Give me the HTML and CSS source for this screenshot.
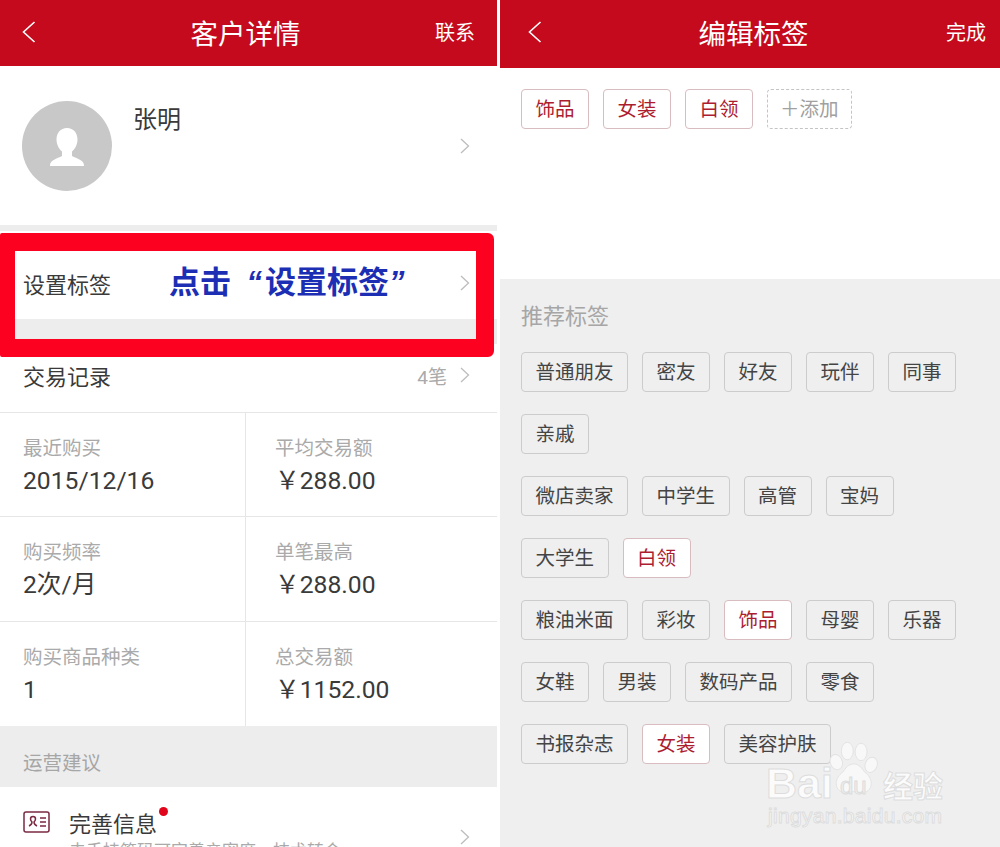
FILE: index.html
```html
<!DOCTYPE html>
<html lang="zh-CN">
<head>
    <meta charset="UTF-8">
    <title>客户详情</title>
    <link rel="stylesheet" href="styles.css">
</head>
<body>

<div class="screens">

    <!-- 左边：客户详情 -->
    <div class="panel panel-left">
        <div class="top-bar">
            <svg class="back" width="14" height="22" viewBox="0 0 14 22"><polyline points="12.5,1 1.5,11 12.5,21"/></svg>
            <div class="title">客户详情</div>
            <div class="action">联系</div>
        </div>

        <div class="profile">
            <div class="avatar">
                <svg width="90" height="90" viewBox="0 0 90 90"><path d="M45 27c-6.500 0-10.500 5-10.500 11.500 0 5 2.500 9.500 5.500 12v4.500c-5 2.500-12 4-12 9.500v0.500h34v-0.500c0-5.500-7-7-12-9.500v-4.500c3-2.500 5.500-7 5.500-12 0-6.500-4-11.500-10.500-11.500z" fill="#fff"/></svg>
            </div>
            <div class="name">张明</div>
            <svg class="chevron" width="10" height="16" viewBox="0 0 10 16"><polyline points="1,1 8.500,8 1,15"/></svg>
        </div>

        <div class="row row-tags">
            <span class="row-label">设置标签</span>
            <svg class="chevron" width="10" height="16" viewBox="0 0 10 16"><polyline points="1,1 8.500,8 1,15"/></svg>
        </div>

        <div class="row row-trade">
            <span class="row-label">交易记录</span>
            <span class="row-count">4笔</span>
            <svg class="chevron" width="10" height="16" viewBox="0 0 10 16"><polyline points="1,1 8.500,8 1,15"/></svg>
        </div>

        <div class="stats">
            <div class="stat"><div class="stat-label">最近购买</div><div class="stat-value">2015/12/16</div></div>
            <div class="stat"><div class="stat-label">平均交易额</div><div class="stat-value">￥288.00</div></div>
            <div class="stat"><div class="stat-label">购买频率</div><div class="stat-value">2次/月</div></div>
            <div class="stat"><div class="stat-label">单笔最高</div><div class="stat-value">￥288.00</div></div>
            <div class="stat"><div class="stat-label">购买商品种类</div><div class="stat-value">1</div></div>
            <div class="stat"><div class="stat-label">总交易额</div><div class="stat-value">￥1152.00</div></div>
        </div>

        <div class="section-title">运营建议</div>

        <div class="advice">
            <svg class="advice-icon" width="28" height="22" viewBox="0 0 28 22">
                <rect x="1" y="1" width="25" height="20" rx="2"/>
                <path d="M6 15c2-1 3-2 3-4-1-1-1.500-2-1.500-3 0-1.500 1-2.500 2.500-2.500s2.500 1 2.500 2.500c0 1-.5 2-1.500 3 0 2 1 3 3 4"/>
                <path d="M17 7h6M17 11h6M17 15h6"/>
            </svg>
            <div class="advice-text">
                <div class="advice-name">完善信息<span class="dot"></span></div>
                <div class="advice-desc">去手持筹码可完善亲密度，技术转会</div>
            </div>
            <svg class="chevron" width="10" height="16" viewBox="0 0 10 16"><polyline points="1,1 8.500,8 1,15"/></svg>
        </div>

        <!-- 截图上的红框和说明文字 -->
        <div class="mark-box">
            <span class="mark-text">点击<i class="quote-open">“</i>设置标签<i class="quote-close">”</i></span>
        </div>
    </div>

    <!-- 右边：编辑标签 -->
    <div class="panel panel-right">
        <div class="top-bar">
            <svg class="back" width="14" height="22" viewBox="0 0 14 22"><polyline points="12.5,1 1.5,11 12.5,21"/></svg>
            <div class="title">编辑标签</div>
            <div class="action">完成</div>
        </div>

        <div class="my-tags">
            <span class="tag active">饰品</span>
            <span class="tag active">女装</span>
            <span class="tag active">白领</span>
            <span class="tag add">＋添加</span>
        </div>

        <div class="recommend">
            <div class="recommend-title">推荐标签</div>
            <div class="tag-group">
                <span class="tag">普通朋友</span>
                <span class="tag">密友</span>
                <span class="tag">好友</span>
                <span class="tag">玩伴</span>
                <span class="tag">同事</span>
                <span class="tag">亲戚</span>
            </div>
            <div class="tag-group">
                <span class="tag">微店卖家</span>
                <span class="tag">中学生</span>
                <span class="tag">高管</span>
                <span class="tag">宝妈</span>
                <span class="tag">大学生</span>
                <span class="tag active">白领</span>
            </div>
            <div class="tag-group">
                <span class="tag">粮油米面</span>
                <span class="tag">彩妆</span>
                <span class="tag active">饰品</span>
                <span class="tag">母婴</span>
                <span class="tag">乐器</span>
                <span class="tag">女鞋</span>
                <span class="tag">男装</span>
                <span class="tag">数码产品</span>
                <span class="tag">零食</span>
                <span class="tag">书报杂志</span>
                <span class="tag active">女装</span>
                <span class="tag">美容护肤</span>
            </div>
        </div>

        <!-- 水印 -->
        <div class="watermark">
            <svg class="paw" width="57" height="57" viewBox="0 0 62 62">
                <ellipse cx="9" cy="24" rx="6.500" ry="8.500" transform="rotate(-20 9 24)"/>
                <ellipse cx="21" cy="12" rx="6.500" ry="9.500"/>
                <ellipse cx="36" cy="13" rx="6.500" ry="9.500"/>
                <ellipse cx="47" cy="27" rx="6.500" ry="8.500" transform="rotate(20 47 27)"/>
                <path d="M28 26c-6 0-9 5-12 9-4 3-7 7-7 12 0 7 5 11 12 10 3-.5 5-1 7-1s4 .5 7 1c7 1 12-3 12-10 0-5-3-9-7-12-3-4-6-9-12-9z"/>
            </svg>
            <span class="wm-bai">Bai</span>
            <span class="wm-du">du</span>
            <span class="wm-cn">经验</span>
            <span class="wm-url">jingyan.baidu.com</span>
        </div>
    </div>

</div>

</body>
</html>
```

FILE: styles.css
```css
* {
    box-sizing: border-box;
}

html, body {
    margin: 0;
    padding: 0;
    height: 847px;
    overflow: hidden;
    background-color: #fff;
}

body {
    font-family: "Noto Sans CJK SC", "Noto Sans", sans-serif;
    color: #3a3a3a;
}

.screens {
    display: flex;
    justify-content: space-between;
    width: 1000px;
    height: 847px;
}

.panel {
    position: relative;
    height: 847px;
    overflow: hidden;
}

.panel-left {
    width: 497px;
    background-color: #ededed;
}

.panel-right {
    width: 500px;
    background-color: #efefef;
}

.top-bar {
    display: flex;
    align-items: center;
    justify-content: space-between;
    height: 66px;
    padding: 0 22px 2px;
    background-color: #c40a1c;
    color: #fff;
}

.panel-right .top-bar {
    height: 68px;
    padding: 0 14px 4px 28px;
}

.title {
    flex: 1;
    text-align: center;
    font-size: 27.500px;
    line-height: 40px;
}

.panel-left .title {
    padding-left: 20px;
}

.panel-right .title {
    padding-left: 19px;
}

.action {
    font-size: 20px;
    line-height: 30px;
}

.back {
    fill: none;
    stroke: #fff;
    stroke-width: 1.600;
}

.chevron {
    fill: none;
    stroke: #bdbdbd;
    stroke-width: 1.300;
    flex-shrink: 0;
}

.profile {
    display: flex;
    align-items: center;
    height: 159px;
    margin-bottom: 6px;
    padding: 0 27px 0 22px;
    background-color: #fff;
}

.avatar {
    width: 90px;
    height: 90px;
    border-radius: 50%;
    background-color: #c8c8c8;
    flex-shrink: 0;
}

.name {
    flex: 1;
    align-self: flex-start;
    margin-top: 34px;
    padding-left: 21px;
    font-size: 24px;
    line-height: 36px;
}

.row {
    display: flex;
    align-items: center;
    padding: 0 27px 0 23px;
    background-color: #fff;
}

.row-tags {
    height: 88px;
    margin-bottom: 25px;
    padding-top: 16px;
}

.row-trade {
    height: 68px;
    padding-bottom: 6px;
}

.row-label {
    flex: 1;
    font-size: 22px;
    line-height: 32px;
}

.row-count {
    margin-right: 13px;
    font-size: 19px;
    color: #aaa;
    font-family: Roboto, "Noto Sans CJK SC", sans-serif;
}

.stats {
    display: grid;
    grid-template-columns: 246px 1fr;
    grid-auto-rows: 104.330px;
    border-top: 1px solid #e6e6e6;
    background-color: #fff;
}

.stat {
    padding: 20px 0 0 23px;
    border-bottom: 1px solid #e6e6e6;
}

.stat:nth-child(odd) {
    border-right: 1px solid #e6e6e6;
}

.stat:nth-child(even) {
    padding-left: 29px;
}

.stat:nth-last-child(-n+2) {
    border-bottom: none;
}

.stat-label {
    font-size: 19.500px;
    line-height: 28px;
    color: #aaa;
}

.stat-value {
    margin-top: 3px;
    font-family: Roboto, "Noto Sans CJK SC", sans-serif;
    font-size: 24.700px;
    line-height: 34px;
    color: #3a3a3a;
}

.section-title {
    height: 61px;
    padding: 22px 0 0 23px;
    font-size: 19.500px;
    line-height: 28px;
    color: #a6a6a6;
    background-color: #ededed;
}

.advice {
    display: flex;
    align-items: flex-start;
    height: 80px;
    padding: 24px 27px 0 23px;
    background-color: #fff;
}

.advice-icon {
    margin-right: 18px;
    flex-shrink: 0;
    fill: none;
    stroke: #7a2a42;
    stroke-width: 1.500;
}

.advice-text {
    flex: 1;
    margin-top: -5px;
}

.advice-name {
    position: relative;
    display: inline-block;
    font-size: 22px;
    line-height: 32px;
}

.dot {
    position: absolute;
    top: 1px;
    right: -11px;
    width: 9px;
    height: 9px;
    border-radius: 50%;
    background-color: #e0051b;
}

.advice-desc {
    margin-top: 0;
    font-size: 17px;
    line-height: 24px;
    color: #aaa;
}

.advice .chevron {
    margin-top: 18px;
}

.mark-box {
    position: absolute;
    top: 233px;
    left: 0;
    display: flex;
    align-items: center;
    width: 494px;
    height: 124px;
    padding: 0 0 28px 154px;
    border-style: solid;
    border-color: #fd0220;
    border-width: 18px 18px 18px 15px;
    border-radius: 2px 6px 6px 2px;
}

.mark-text {
    font-size: 31px;
    font-weight: bold;
    line-height: 40px;
    color: #1c2fb4;
    white-space: nowrap;
}

.mark-text i {
    display: inline-block;
    font-family: "Liberation Sans", sans-serif;
    font-style: italic;
}

.quote-open {
    width: 34px;
    text-align: right;
    padding-right: 3px;
}

.quote-close {
    width: 18px;
}

.my-tags {
    display: flex;
    gap: 14px;
    height: 211px;
    padding: 21px 0 0 21px;
    background-color: #fff;
}

.recommend {
    padding: 20px 20px 0 21px;
}

.recommend-title {
    margin-bottom: 23px;
    font-size: 22px;
    line-height: 30px;
    color: #a6a6a6;
}

.tag-group {
    display: flex;
    flex-wrap: wrap;
    gap: 22px 14px;
    margin-bottom: 22px;
}

.tag {
    height: 40px;
    padding: 0 13.500px;
    border: 1px solid #cccccc;
    border-radius: 4px;
    font-size: 19.500px;
    line-height: 36px;
    color: #444;
    white-space: nowrap;
}

.tag.active {
    border-color: #d8bcbf;
    background-color: #fff;
    color: #ad1d30;
}

.tag.add {
    padding: 0 12px;
    border: 1px dashed #c4c4c4;
    color: #a0a0a0;
}

.watermark {
    position: absolute;
    top: 738px;
    left: 266px;
    width: 182px;
    height: 92px;
    color: rgba(255, 255, 255, 0.75);
}

.paw {
    position: absolute;
    top: 2px;
    left: 62px;
    fill: #f8f8f8;
    stroke: #e2e2e2;
}

.watermark span {
    position: absolute;
    white-space: nowrap;
    -webkit-text-stroke: 1px #dddddd;
}

.wm-bai {
    top: 28px;
    left: 0;
    font-family: "Liberation Sans", sans-serif;
    font-size: 43px;
    font-weight: bold;
    line-height: 34px;
}

.wm-du {
    top: 34px;
    left: 74px;
    font-family: "Liberation Sans", sans-serif;
    font-size: 24px;
    line-height: 28px;
    color: #f0f0f0;
}

.wm-cn {
    top: 28px;
    left: 117px;
    font-size: 30px;
    font-weight: bold;
    line-height: 36px;
}

.wm-url {
    top: 66px;
    left: 2px;
    font-family: "Liberation Sans", sans-serif;
    font-size: 21px;
    line-height: 24px;
    letter-spacing: 0.300px;
}
```
